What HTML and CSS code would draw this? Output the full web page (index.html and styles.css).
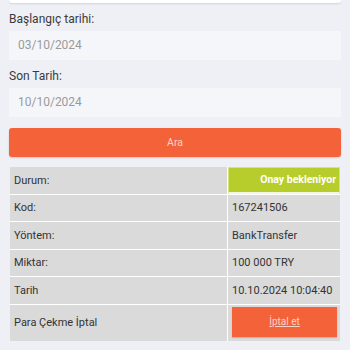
FILE: index.html
```html
<!DOCTYPE html>
<html lang="tr">
<head>
    <meta charset="UTF-8">
    <meta name="viewport" content="width=device-width, initial-scale=1.0">
    <title>Para Çekme</title>
    <link rel="stylesheet" href="styles.css">
</head>
<body>
    <div class="page">
        <div class="top-card"></div>

        <!-- Tarih filtresi -->
        <div class="field">
            <label class="field-label">Başlangıç tarihi:</label>
            <div class="field-input">03/10/2024</div>
        </div>

        <div class="field">
            <label class="field-label">Son Tarih:</label>
            <div class="field-input">10/10/2024</div>
        </div>

        <button class="search-button">Ara</button>

        <!-- Sonuç tablosu -->
        <div class="result">
            <div class="cell">Durum:</div>
            <div class="cell status"><span>Onay bekleniyor</span></div>

            <div class="cell">Kod:</div>
            <div class="cell">167241506</div>

            <div class="cell">Yöntem:</div>
            <div class="cell">BankTransfer</div>

            <div class="cell">Miktar:</div>
            <div class="cell">100 000 TRY</div>

            <div class="cell">Tarih</div>
            <div class="cell">10.10.2024 10:04:40</div>

            <div class="cell">Para Çekme İptal</div>
            <div class="cell cell-action">
                <a href="#" class="cancel-button">İptal et</a>
            </div>
        </div>
    </div>
</body>
</html>
```

FILE: styles.css
```css
body {
    margin: 0;
    font-family: Roboto, "Noto Sans", sans-serif;
    background-color: #eef0f6;
    color: #333;
}

.page {
    padding: 0 9px;
}

.top-card {
    height: 3px;
    background-color: #fff;
    border-radius: 0 0 3px 3px;
    box-shadow: 0 1px 2px rgba(0, 0, 0, 0.12);
}

.field {
    margin-top: 9px;
}

.field-label {
    display: block;
    font-size: 12px;
    line-height: 14px;
    color: #3a3a3a;
    margin-bottom: 5px;
}

.field-input {
    height: 29px;
    line-height: 29px;
    padding-left: 9px;
    background-color: #f5f6fa;
    font-size: 12px;
    color: #9a9a9a;
}

.search-button {
    display: block;
    width: 100%;
    height: 29px;
    margin-top: 11px;
    border: none;
    border-radius: 3px;
    background-color: #f4623a;
    color: #fbd3c5;
    font-family: inherit;
    font-size: 10.5px;
    box-shadow: 0 1px 2px rgba(0, 0, 0, 0.15);
}

.result {
    display: grid;
    grid-template-columns: 217px 1fr;
    grid-template-rows: repeat(5, 26.5px) 36px;
    gap: 1px;
    margin: 10px 1px 0 1px;
    background-color: #fff;
}

.cell {
    display: flex;
    align-items: center;
    padding: 0 4px;
    background-color: #dadada;
    font-size: 11px;
    color: #333;
}

.status {
    justify-content: flex-end;
    padding: 0 3px 0 0;
    background-color: #b7cd2b;
    border: 1px solid #d7e47c;
    border-bottom: 2px solid #f3f6e0;
    font-weight: bold;
    font-size: 10.5px;
    color: #fff;
}

.cell-action {
    padding: 2px 3px 4px 4px;
    align-items: stretch;
}

.cancel-button {
    flex: 1;
    display: flex;
    align-items: center;
    justify-content: center;
    background-color: #f4623a;
    color: #fbd3c5;
    font-size: 10px;
    box-shadow: 0 1px 1px rgba(0, 0, 0, 0.15);
}
```
